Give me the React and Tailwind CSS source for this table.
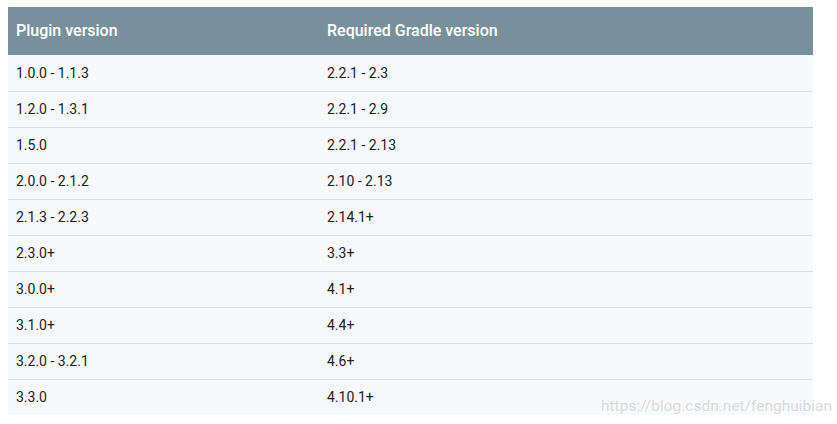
import React from "react";

const rows = [
  ["1.0.0 - 1.1.3", "2.2.1 - 2.3"],
  ["1.2.0 - 1.3.1", "2.2.1 - 2.9"],
  ["1.5.0", "2.2.1 - 2.13"],
  ["2.0.0 - 2.1.2", "2.10 - 2.13"],
  ["2.1.3 - 2.2.3", "2.14.1+"],
  ["2.3.0+", "3.3+"],
  ["3.0.0+", "4.1+"],
  ["3.1.0+", "4.4+"],
  ["3.2.0 - 3.2.1", "4.6+"],
  ["3.3.0", "4.10.1+"],
];

export default function App() {
  return (
    <div
      className="relative w-[837px] h-[424px] bg-white pt-[7px] pl-[8px]"
      style={{ fontFamily: "Roboto, 'Liberation Sans', sans-serif" }}
    >
      <div className="w-[805px] bg-[#f8f9fa]">
        <div className="flex h-[48px] items-center bg-[#78909c] text-white text-[16px] font-medium">
          <div className="w-[311px] pl-[8px]">Plugin version</div>
          <div className="flex-1 pl-[8px]">Required Gradle version</div>
        </div>
        {rows.map(([a, b], i) => (
          <div
            key={i}
            className={
              "flex h-[36px] items-center text-[14px] text-[#202124] " +
              (i > 0 ? "border-t border-[#dadce0]" : "")
            }
          >
            <div className="w-[311px] pl-[8px]">{a}</div>
            <div className="flex-1 pl-[8px]">{b}</div>
          </div>
        ))}
      </div>
      <div
        className="absolute left-[601px] top-[395px] text-[15.5px] text-[#d9d9d9]"
        style={{ textShadow: "1px 1px 0 #fff" }}
      >
        https://blog.csdn.net/fenghuibian
      </div>
    </div>
  );
}
